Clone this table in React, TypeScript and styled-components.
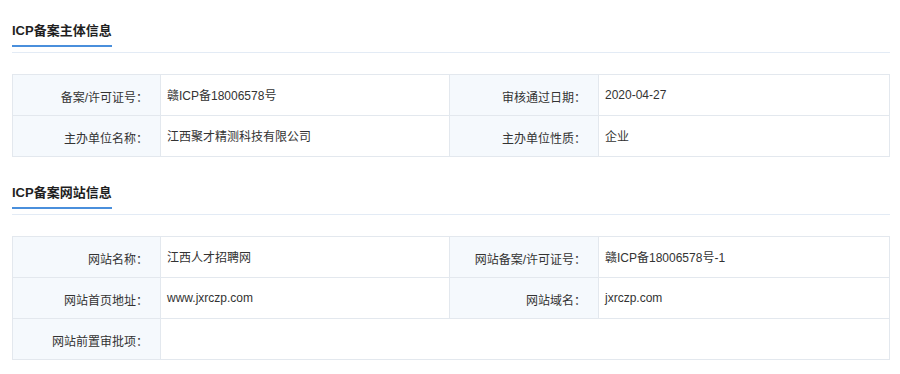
import React from 'react';
import styled, { createGlobalStyle } from 'styled-components';

interface Field {
  label: string;
  value: string;
  wide?: boolean;
}

interface Section {
  title: string;
  fields: Field[];
}

const sections: Section[] = [
  {
    title: 'ICP备案主体信息',
    fields: [
      { label: '备案/许可证号：', value: '赣ICP备18006578号' },
      { label: '审核通过日期：', value: '2020-04-27' },
      { label: '主办单位名称：', value: '江西聚才精测科技有限公司' },
      { label: '主办单位性质：', value: '企业' },
    ],
  },
  {
    title: 'ICP备案网站信息',
    fields: [
      { label: '网站名称：', value: '江西人才招聘网' },
      { label: '网站备案/许可证号：', value: '赣ICP备18006578号-1' },
      { label: '网站首页地址：', value: 'www.jxrczp.com' },
      { label: '网站域名：', value: 'jxrczp.com' },
      { label: '网站前置审批项：', value: '', wide: true },
    ],
  },
];

const GlobalStyle = createGlobalStyle`
  body {
    margin: 0;
    background: #fff;
    font-family: 'Liberation Sans', 'Noto Sans CJK SC', sans-serif;
    color: #333;
  }
`;

const Page = styled.div`
  width: 878px;
  padding: 21px 0 0 12px;
`;

const Block = styled.section`
  & + & {
    margin-top: 26px;
  }
`;

const Header = styled.div`
  border-bottom: 1px solid #e3ebf5;
  padding-bottom: 5px;
`;

const Title = styled.h2`
  display: inline-block;
  margin: 0;
  padding-bottom: 4px;
  font-size: 13px;
  line-height: 20px;
  font-weight: bold;
  color: #1f1f1f;
  border-bottom: 2px solid #4a8fdc;
`;

const Grid = styled.div`
  margin-top: 21px;
  display: grid;
  grid-template-columns: 148px 289px 149px 1fr;
  grid-auto-rows: 41px;
  border-top: 1px solid #e3e8ee;
  border-left: 1px solid #e3e8ee;
`;

const Label = styled.div`
  box-sizing: border-box;
  display: flex;
  align-items: center;
  justify-content: flex-end;
  padding: 3px 12px 0 0;
  background: #f5f9fd;
  border-right: 1px solid #e3e8ee;
  border-bottom: 1px solid #e3e8ee;
  font-size: 12px;
  color: #333;
`;

const Value = styled.div<{ $wide?: boolean }>`
  box-sizing: border-box;
  display: flex;
  align-items: center;
  padding: 0 0 1px 6px;
  grid-column: ${({ $wide }) => ($wide ? 'span 3' : 'auto')};
  border-right: 1px solid #e3e8ee;
  border-bottom: 1px solid #e3e8ee;
  font-size: 12px;
  color: #333;
`;

export default function App() {
  return (
    <>
      <GlobalStyle />
      <Page>
        {sections.map((s) => (
          <Block key={s.title}>
            <Header>
              <Title>{s.title}</Title>
            </Header>
            <Grid>
              {s.fields.map((f) => (
                <React.Fragment key={f.label}>
                  <Label>{f.label}</Label>
                  <Value $wide={f.wide}>{f.value}</Value>
                </React.Fragment>
              ))}
            </Grid>
          </Block>
        ))}
      </Page>
    </>
  );
}
